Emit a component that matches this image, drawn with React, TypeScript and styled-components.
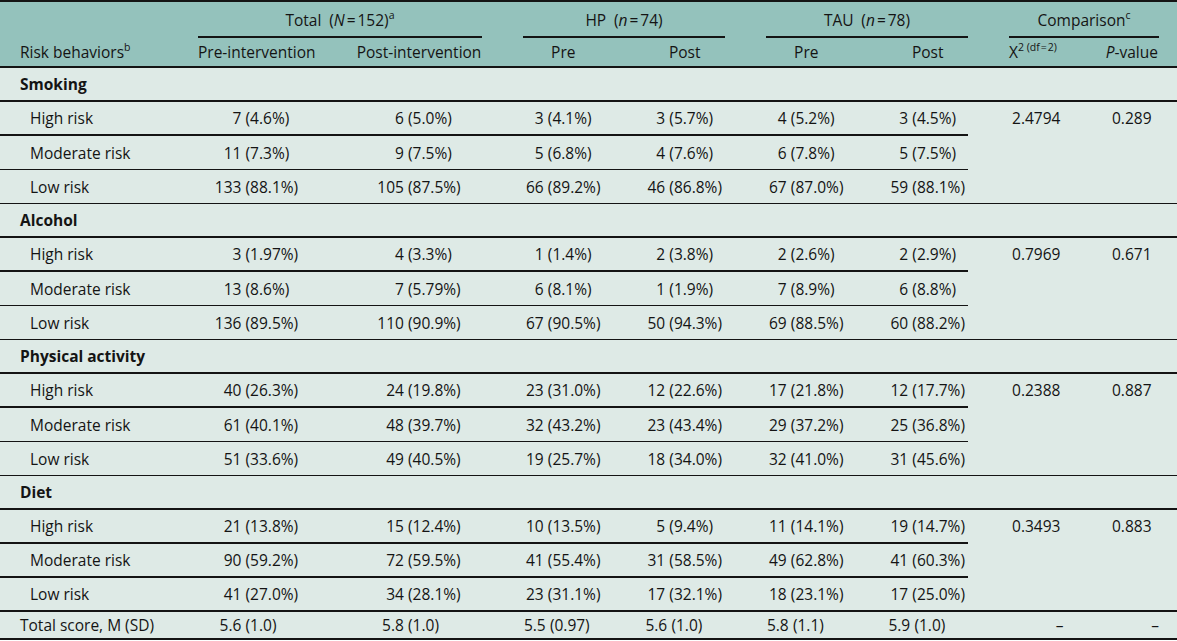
import React from 'react'
import styled, { createGlobalStyle } from 'styled-components'

const ink = '#141414'

const GlobalStyle = createGlobalStyle`
  html, body {
    margin: 0;
    padding: 0;
    background: #ffffff;
  }
  body {
    font-family: 'Open Sans', 'Noto Sans', sans-serif;
    color: ${ink};
  }
`

const Table = styled.table`
  width: 1177px;
  table-layout: fixed;
  border-collapse: separate;
  border-spacing: 0;
  font-size: 15.5px;
  line-height: 20px;
  border-top: 2px solid ${ink};
  border-bottom: 2px solid ${ink};
`
const Col = styled.col<{ $w: number }>`
  width: ${p => p.$w}px;
`
const HeadRow = styled.tr<{ $h: number }>`
  height: ${p => p.$h}px;
  background: #94c2bc;
`
const BodyRow = styled.tr<{ $h?: number }>`
  height: ${p => p.$h ?? 34}px;
  background: #deeae6;
`
const HeadCell = styled.th<{ $pl?: number; $pr?: number; $align?: string }>`
  padding: 0 ${p => p.$pr ?? 20.5}px 0 ${p => p.$pl ?? 20.5}px;
  font-weight: 400;
  text-align: ${p => p.$align ?? 'center'};
  white-space: nowrap;
`
const SpanCell = styled(HeadCell)`
  vertical-align: bottom;
`
const SpanLabel = styled.div`
  padding-bottom: 6px;
  border-bottom: 2px solid ${ink};
`
const ColumnCell = styled(HeadCell)`
  vertical-align: middle;
  border-bottom: 2px solid ${ink};
`
const Cell = styled.td<{ $pl?: number; $pr?: number; $rule?: number; $align?: string }>`
  padding: 0 ${p => p.$pr ?? 20.5}px 0 ${p => p.$pl ?? 20.5}px;
  text-align: ${p => p.$align ?? 'center'};
  vertical-align: middle;
  white-space: nowrap;
  border-bottom: ${p => (p.$rule ? `${p.$rule}px solid ${ink}` : 'none')};
`
const StatCell = styled(Cell)`
  vertical-align: top;
  padding-top: 6px;
`
const GroupCell = styled.th`
  padding: 0 20px;
  text-align: left;
  font-weight: 700;
  border-bottom: 2px solid ${ink};
`
const Value = styled.span`
  display: inline-flex;
  white-space: nowrap;
`
const Count = styled.span<{ $digits: number }>`
  min-width: ${p => p.$digits}ch;
  text-align: right;
`
const Share = styled.span`
  min-width: 3.4em;
  margin-left: 0.27em;
  text-align: left;
`
const Sup = styled.sup`
  font-size: 10.5px;
  line-height: 0;
  vertical-align: 7px;
`
const Eq = styled.span<{ $gap?: number }>`
  margin: 0 ${p => p.$gap ?? 2}px;
`
const Em = styled.i`
  font-style: italic;
`

type Group = {
  title: string
  chi: string
  p: string
  rules: number[]
  rows: [string, string[]][]
}

const groups: Group[] = [
  {
    title: 'Smoking',
    chi: '2.4794',
    p: '0.289',
    rules: [2, 1, 1],
    rows: [
      ['High risk', ['7 (4.6%)', '6 (5.0%)', '3 (4.1%)', '3 (5.7%)', '4 (5.2%)', '3 (4.5%)']],
      ['Moderate risk', ['11 (7.3%)', '9 (7.5%)', '5 (6.8%)', '4 (7.6%)', '6 (7.8%)', '5 (7.5%)']],
      ['Low risk', ['133 (88.1%)', '105 (87.5%)', '66 (89.2%)', '46 (86.8%)', '67 (87.0%)', '59 (88.1%)']],
    ],
  },
  {
    title: 'Alcohol',
    chi: '0.7969',
    p: '0.671',
    rules: [2, 1, 1],
    rows: [
      ['High risk', ['3 (1.97%)', '4 (3.3%)', '1 (1.4%)', '2 (3.8%)', '2 (2.6%)', '2 (2.9%)']],
      ['Moderate risk', ['13 (8.6%)', '7 (5.79%)', '6 (8.1%)', '1 (1.9%)', '7 (8.9%)', '6 (8.8%)']],
      ['Low risk', ['136 (89.5%)', '110 (90.9%)', '67 (90.5%)', '50 (94.3%)', '69 (88.5%)', '60 (88.2%)']],
    ],
  },
  {
    title: 'Physical activity',
    chi: '0.2388',
    p: '0.887',
    rules: [2, 1, 1],
    rows: [
      ['High risk', ['40 (26.3%)', '24 (19.8%)', '23 (31.0%)', '12 (22.6%)', '17 (21.8%)', '12 (17.7%)']],
      ['Moderate risk', ['61 (40.1%)', '48 (39.7%)', '32 (43.2%)', '23 (43.4%)', '29 (37.2%)', '25 (36.8%)']],
      ['Low risk', ['51 (33.6%)', '49 (40.5%)', '19 (25.7%)', '18 (34.0%)', '32 (41.0%)', '31 (45.6%)']],
    ],
  },
  {
    title: 'Diet',
    chi: '0.3493',
    p: '0.883',
    rules: [2, 2, 2],
    rows: [
      ['High risk', ['21 (13.8%)', '15 (12.4%)', '10 (13.5%)', '5 (9.4%)', '11 (14.1%)', '19 (14.7%)']],
      ['Moderate risk', ['90 (59.2%)', '72 (59.5%)', '41 (55.4%)', '31 (58.5%)', '49 (62.8%)', '41 (60.3%)']],
      ['Low risk', ['41 (27.0%)', '34 (28.1%)', '23 (31.1%)', '17 (32.1%)', '18 (23.1%)', '17 (25.0%)']],
    ],
  },
]

const totals = ['5.6 (1.0)', '5.8 (1.0)', '5.5 (0.97)', '5.6 (1.0)', '5.8 (1.1)', '5.9 (1.0)']

// digits in the widest count of each data column
const digits = [3, 3, 2, 2, 2, 2]
const widths = [177.5, 158, 167, 121.5, 121.5, 121.5, 101, 116, 93]

const Figure = ({ text, digits }: { text: string; digits: number }) => {
  const i = text.indexOf(' ')
  return (
    <Value>
      <Count $digits={digits}>{text.slice(0, i)}</Count>
      <Share>{text.slice(i + 1)}</Share>
    </Value>
  )
}

const DataCells = ({ values, rule }: { values: string[]; rule?: number }) => (
  <>
    {values.map((v, i) => (
      <Cell key={i} $rule={rule} $pr={i === 5 ? 0 : undefined}>
        <Figure text={v} digits={digits[i]} />
      </Cell>
    ))}
  </>
)

const App = () => {
  return (
    <>
      <GlobalStyle />
      <Table>
        <colgroup>
          {widths.map((w, i) => (
            <Col key={i} $w={w} />
          ))}
        </colgroup>
        <thead>
          <HeadRow $h={36}>
            <SpanCell />
            <SpanCell colSpan={2}>
              <SpanLabel>
                Total&ensp;(<Em>N</Em>
                <Eq>=</Eq>152)<Sup>a</Sup>
              </SpanLabel>
            </SpanCell>
            <SpanCell colSpan={2}>
              <SpanLabel>
                HP&ensp;(<Em>n</Em>
                <Eq>=</Eq>74)
              </SpanLabel>
            </SpanCell>
            <SpanCell colSpan={2} $pr={0}>
              <SpanLabel>
                TAU&ensp;(<Em>n</Em>
                <Eq>=</Eq>78)
              </SpanLabel>
            </SpanCell>
            <SpanCell colSpan={2} $pl={41} $pr={18}>
              <SpanLabel>
                Comparison<Sup>c</Sup>
              </SpanLabel>
            </SpanCell>
          </HeadRow>
          <HeadRow $h={30}>
            <ColumnCell $pl={20} $align="left">
              Risk behaviors<Sup>b</Sup>
            </ColumnCell>
            <ColumnCell>Pre-intervention</ColumnCell>
            <ColumnCell>Post-intervention</ColumnCell>
            <ColumnCell>Pre</ColumnCell>
            <ColumnCell>Post</ColumnCell>
            <ColumnCell>Pre</ColumnCell>
            <ColumnCell $pr={0}>Post</ColumnCell>
            <ColumnCell $pl={41} $align="left">
              X
              <Sup>
                2 (df<Eq $gap={1}>=</Eq>2)
              </Sup>
            </ColumnCell>
            <ColumnCell $pr={18}>
              <Em>P</Em>-value
            </ColumnCell>
          </HeadRow>
        </thead>
        <tbody>
          {groups.map(g => (
            <React.Fragment key={g.title}>
              <BodyRow>
                <GroupCell colSpan={9}>{g.title}</GroupCell>
              </BodyRow>
              {g.rows.map(([label, values], r) => (
                <BodyRow key={label}>
                  <Cell $pl={30} $align="left" $rule={g.rules[r]}>
                    {label}
                  </Cell>
                  <DataCells values={values} rule={g.rules[r]} />
                  {r === 0 && (
                    <>
                      <StatCell rowSpan={3} $pl={41} $rule={g.rules[2]}>
                        {g.chi}
                      </StatCell>
                      <StatCell rowSpan={3} $pr={18} $rule={g.rules[2]}>
                        {g.p}
                      </StatCell>
                    </>
                  )}
                </BodyRow>
              ))}
            </React.Fragment>
          ))}
          <BodyRow $h={26}>
            <Cell $pl={20} $align="left">
              Total score, M (SD)
            </Cell>
            <DataCells values={totals} />
            <Cell $pl={41} $align="right">
              –
            </Cell>
            <Cell $pr={18} $align="right">
              –
            </Cell>
          </BodyRow>
        </tbody>
      </Table>
    </>
  )
}

export default App
